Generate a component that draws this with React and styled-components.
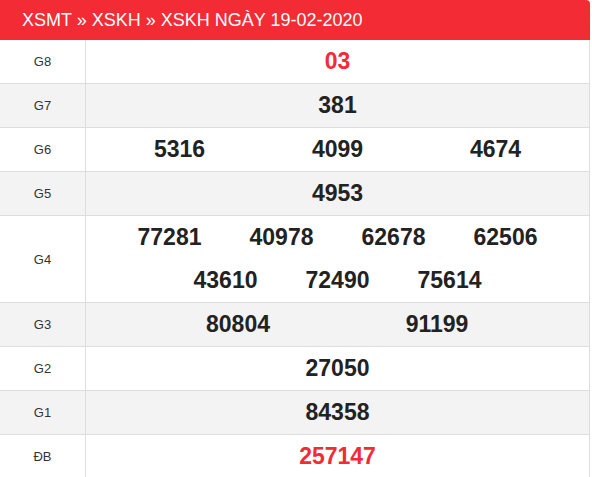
import React from "react";
import styled, { createGlobalStyle } from "styled-components";

const Global = createGlobalStyle`
  html, body { margin: 0; padding: 0; background: #fff; }
  body { font-family: "Liberation Sans", Arial, sans-serif; }
`;

const Wrap = styled.div`
  width: 590px;
`;

const Header = styled.div`
  height: 40px;
  background: #f22b34;
  color: #fff;
  font-size: 18px;
  line-height: 40px;
  padding-left: 22px;
  border-top-right-radius: 4px;
  box-sizing: border-box;
  white-space: nowrap;
`;

const Row = styled.div`
  display: grid;
  grid-template-columns: 86px 1fr;
  background: ${(p) => (p.$alt ? "#f3f3f3" : "#fff")};
  border-bottom: 1px solid #ddd;
  border-right: 1px solid #ddd;
`;

const Label = styled.div`
  border-right: 1px solid #ddd;
  display: flex;
  align-items: center;
  justify-content: center;
  font-size: 13px;
  color: #333;
`;

const Numbers = styled.div`
  display: flex;
  flex-wrap: wrap;
  justify-content: center;
`;

const Num = styled.span`
  width: ${(p) => p.$w}px;
  height: 43px;
  line-height: 43px;
  text-align: center;
  font-size: 23px;
  font-weight: bold;
  color: ${(p) => (p.$red ? "#f22b34" : "#222")};
`;

const rows = [
  { label: "G8", nums: ["03"], w: 200, red: true },
  { label: "G7", nums: ["381"], w: 200 },
  { label: "G6", nums: ["5316", "4099", "4674"], w: 158 },
  { label: "G5", nums: ["4953"], w: 200 },
  { label: "G4", nums: ["77281", "40978", "62678", "62506", "43610", "72490", "75614"], w: 112 },
  { label: "G3", nums: ["80804", "91199"], w: 199 },
  { label: "G2", nums: ["27050"], w: 200 },
  { label: "G1", nums: ["84358"], w: 200 },
  { label: "ĐB", nums: ["257147"], w: 200, red: true },
];

export default function App() {
  return (
    <Wrap>
      <Global />
      <Header>XSMT » XSKH » XSKH NGÀY 19-02-2020</Header>
      {rows.map((r, i) => (
        <Row key={r.label} $alt={i % 2 === 1}>
          <Label>{r.label}</Label>
          <Numbers>
            {r.nums.map((n) => (
              <Num key={n} $w={r.w} $red={r.red}>
                {n}
              </Num>
            ))}
          </Numbers>
        </Row>
      ))}
    </Wrap>
  );
}
